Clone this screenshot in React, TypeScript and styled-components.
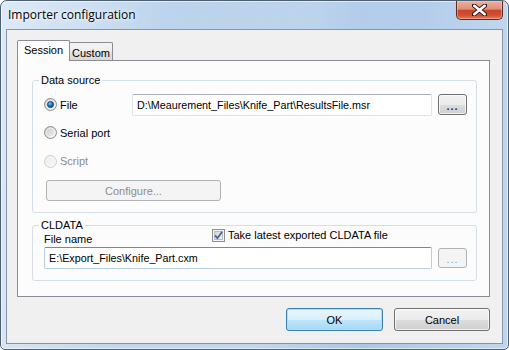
import { FC, ReactElement, ReactNode } from 'react';
import styled, { createGlobalStyle } from 'styled-components';

const GlobalStyle = createGlobalStyle`
    html, body {
        margin: 0;
        padding: 0;
        background: #ffffff;
    }
    body {
        font-family: "Liberation Sans", Arial, sans-serif;
        font-size: 11px;
        color: #000;
    }
`;

const WindowFrame = styled.div`
    box-sizing: border-box;
    width: 509px;
    height: 350px;
    display: flex;
    flex-direction: column;
    border: 1px solid #4f5f72;
    border-radius: 7px 7px 5px 5px;
    background:
        linear-gradient(100deg, rgba(255,255,255,0.35) 0%, rgba(255,255,255,0) 30%, rgba(255,255,255,0.18) 55%, rgba(255,255,255,0) 75%),
        linear-gradient(to right, #cadef2, #b7d0ea 45%, #aac7e7 70%, #c0d6ee);
    box-shadow: inset 0 0 0 1px rgba(255,255,255,0.55);
    overflow: hidden;
`;

const TitleBar = styled.div`
    height: 28px;
    flex: none;
    display: flex;
    align-items: flex-start;
    justify-content: space-between;
    padding: 0 5px 0 7px;
`;

const Title = styled.span`
    font-family: "Open Sans", "Liberation Sans", sans-serif;
    font-size: 12px;
    line-height: 28px;
    color: #000;
    text-shadow: 0 0 6px rgba(255,255,255,0.95), 0 0 3px rgba(255,255,255,0.9);
`;

const CloseButton = styled.div`
    width: 47px;
    height: 19px;
    box-sizing: border-box;
    display: flex;
    align-items: center;
    justify-content: center;
    border: 1px solid #5c2a22;
    border-top: none;
    border-radius: 0 0 5px 5px;
    background: linear-gradient(to bottom, #eab0a2 0%, #df8e7a 45%, #c8462c 52%, #cf4f30 78%, #e47b55 100%);
    box-shadow: inset 0 0 0 1px rgba(255,210,200,0.45);
`;

const Client = styled.div`
    flex: 1;
    margin: 0 5px 5px 5px;
    border: 1px solid #8596a9;
    background: #f0f0f0;
    padding: 10px 12px 11px 10px;
    display: flex;
    flex-direction: column;
`;

const TabStrip = styled.div`
    display: flex;
    align-items: flex-end;
    margin-bottom: -1px;
    height: 21px;
    position: relative;
    z-index: 1;
`;

const Tab = styled.div<{ $active?: boolean }>`
    box-sizing: border-box;
    display: flex;
    align-items: center;
    justify-content: center;
    border: 1px solid #898c95;
    border-radius: 2px 2px 0 0;
    font-size: 11px;
    ${(p) => p.$active ? `
        height: 21px;
        width: 53px;
        border-bottom: none;
        background: #fcfcfc;
        padding-bottom: 2px;
        position: relative;
        z-index: 2;
    ` : `
        height: 18px;
        width: 44px;
        margin-left: -1px;
        margin-bottom: 1px;
        border-bottom: none;
        background: linear-gradient(to bottom, #f4f4f4 0%, #ededed 50%, #e3e3e3 51%, #d8d8d8 100%);
        padding-top: 2px;
    `}
`;

const TabPanel = styled.div`
    box-sizing: border-box;
    height: 237px;
    border: 1px solid #898c95;
    background: #fcfcfc;
    padding: 13px 12px 0 14px;
    display: flex;
    flex-direction: column;
    gap: 6px;
`;

const Group = styled.fieldset<{ $padTop?: number }>`
    margin: 0;
    border: 1px solid #d5dfe5;
    border-radius: 3px;
    padding: ${(p) => p.$padTop ?? 4}px 8px 11px 11px;
    min-inline-size: 0;
`;

const Legend = styled.legend`
    padding: 0 2px;
    margin-left: -5px;
    line-height: 13px;
    font-size: 11px;
`;

const Row = styled.div<{ $h?: number }>`
    display: flex;
    align-items: center;
    height: ${(p) => p.$h ?? 28}px;
`;

const RadioLabel = styled.label<{ $disabled?: boolean; $w?: number }>`
    display: flex;
    align-items: center;
    gap: 3px;
    width: ${(p) => (p.$w ? `${p.$w}px` : 'auto')};
    color: ${(p) => (p.$disabled ? '#8d8d8d' : '#000')};
    font-size: 11px;
`;

const TextBox = styled.div<{ $focused?: boolean; $w: number }>`
    box-sizing: border-box;
    width: ${(p) => p.$w}px;
    height: 22px;
    display: flex;
    align-items: center;
    padding-left: 4px;
    background: #fff;
    border: 1px solid ${(p) => (p.$focused ? '#b5cfe7' : '#dfe2e8')};
    border-top-color: ${(p) => (p.$focused ? '#5d8fc2' : '#abadb3')};
    border-radius: 2px;
    font-size: 10.75px;
    white-space: nowrap;
    overflow: hidden;
`;

const Button = styled.div<{ $w: number; $h?: number; $disabled?: boolean; $default?: boolean }>`
    box-sizing: border-box;
    width: ${(p) => p.$w}px;
    height: ${(p) => p.$h ?? 21}px;
    display: flex;
    align-items: center;
    justify-content: center;
    border-radius: 3px;
    font-size: 11px;
    ${(p) => p.$disabled ? `
        border: 1px solid #adb2b5;
        background: #f4f4f4;
        color: #8d8d8d;
    ` : p.$default ? `
        border: 1px solid #3c7fb1;
        background: linear-gradient(to bottom, #eaf6fd 0%, #d9f0fc 50%, #bee6fd 51%, #a7d9f5 100%);
        box-shadow: inset 0 0 0 1px #a6e1f8;
        color: #000;
    ` : `
        border: 1px solid #707070;
        background: linear-gradient(to bottom, #f2f2f2 0%, #ebebeb 50%, #dddddd 51%, #cfcfcf 100%);
        box-shadow: inset 0 0 0 1px rgba(255,255,255,0.7);
        color: #000;
    `}
`;

const Dots = styled.span<{ $disabled?: boolean }>`
    letter-spacing: 1px;
    color: ${(p) => (p.$disabled ? '#9a9aa8' : '#2a1a7a')};
    font-size: 11px;
    font-weight: ${(p) => (p.$disabled ? 400 : 700)};
    padding-top: 2px;
`;

const FieldLabel = styled.span`
    width: 168px;
    align-self: flex-end;
    font-size: 11px;
    margin-bottom: -2px;
`;

const CheckLabel = styled.label`
    display: flex;
    align-items: center;
    gap: 3px;
    font-size: 11px;
`;

const Footer = styled.div`
    display: flex;
    justify-content: flex-end;
    gap: 11px;
    margin-top: 11px;
`;

const CloseGlyph: FC = () => (
    <svg width="15" height="12" viewBox="0 0 15 12">
        <path d="M2 1.5 L13 10.5 M13 1.5 L2 10.5" stroke="#3a1510" strokeWidth="4.4" strokeLinecap="round" />
        <path d="M2.3 1.8 L12.7 10.2 M12.7 1.8 L2.3 10.2" stroke="#ffffff" strokeWidth="2.6" strokeLinecap="round" />
    </svg>
);

const RadioGlyph: FC<{ checked?: boolean; disabled?: boolean }> = ({ checked, disabled }) => (
    <svg width="13" height="13" viewBox="0 0 13 13">
        <defs>
            <linearGradient id="rb-face" x1="0" y1="0" x2="1" y2="1">
                <stop offset="0" stopColor="#c4c4c4" />
                <stop offset="1" stopColor="#f7f7f7" />
            </linearGradient>
            <linearGradient id="rb-face-off" x1="0" y1="0" x2="1" y2="1">
                <stop offset="0" stopColor="#eaeaea" />
                <stop offset="1" stopColor="#fbfbfb" />
            </linearGradient>
            <radialGradient id="rb-dot" cx="0.4" cy="0.35" r="0.7">
                <stop offset="0" stopColor="#7cc6f7" />
                <stop offset="0.5" stopColor="#1f74bd" />
                <stop offset="1" stopColor="#0b3f72" />
            </radialGradient>
        </defs>
        <circle cx="6.5" cy="6.5" r="6" fill={disabled ? 'url(#rb-face-off)' : 'url(#rb-face)'} stroke={disabled ? '#cfcfcf' : '#8e8f8f'} />
        <circle cx="6.5" cy="6.5" r="4.3" fill="none" stroke={disabled ? '#f6f6f6' : '#ffffff'} strokeOpacity="0.6" />
        {checked && <circle cx="6.5" cy="6.5" r="3.1" fill="url(#rb-dot)" stroke="#143f68" strokeWidth="0.7" />}
    </svg>
);

const CheckGlyph: FC = () => (
    <svg width="13" height="13" viewBox="0 0 13 13">
        <defs>
            <linearGradient id="cb-face" x1="0" y1="0" x2="1" y2="1">
                <stop offset="0" stopColor="#d4d4d4" />
                <stop offset="1" stopColor="#f4f4f4" />
            </linearGradient>
        </defs>
        <rect x="0.5" y="0.5" width="12" height="12" fill="#f4f4f4" stroke="#8e8f8f" />
        <rect x="2.5" y="2.5" width="8" height="8" fill="url(#cb-face)" stroke="#b9bcc0" />
        <path d="M3 6.3 L5.4 9.2 L10.2 2.8" fill="none" stroke="#4f65a3" strokeWidth="1.9" strokeLinejoin="round" />
    </svg>
);

const Radio: FC<{ checked?: boolean; disabled?: boolean; width?: number; children: ReactNode }> = ({ checked, disabled, width, children }) => (
    <RadioLabel $disabled={disabled} $w={width}>
        <RadioGlyph checked={checked} disabled={disabled} />
        {children}
    </RadioLabel>
);

const App: FC = (): ReactElement => {
    return (
        <>
            <GlobalStyle />
            <WindowFrame>
                <TitleBar>
                    <Title>Importer configuration</Title>
                    <CloseButton><CloseGlyph /></CloseButton>
                </TitleBar>
                <Client>
                    <TabStrip>
                        <Tab $active>Session</Tab>
                        <Tab>Custom</Tab>
                    </TabStrip>
                    <TabPanel>
                        <Group>
                            <Legend>Data source</Legend>
                            <Row $h={27}>
                                <Radio checked width={88}>File</Radio>
                                <TextBox $w={300}>D:\Meaurement_Files\Knife_Part\ResultsFile.msr</TextBox>
                                <Button $w={29} style={{ marginLeft: 6 }}><Dots>...</Dots></Button>
                            </Row>
                            <Row $h={29}>
                                <Radio>Serial port</Radio>
                            </Row>
                            <Row $h={28}>
                                <Radio disabled>Script</Radio>
                            </Row>
                            <Row $h={21} style={{ marginTop: 5, paddingLeft: 2 }}>
                                <Button $w={175} $disabled>Configure...</Button>
                            </Row>
                        </Group>
                        <Group $padTop={0}>
                            <Legend>CLDATA</Legend>
                            <Row $h={16} style={{ marginTop: -5 }}>
                                <FieldLabel>File name</FieldLabel>
                                <CheckLabel><CheckGlyph />Take latest exported CLDATA file</CheckLabel>
                            </Row>
                            <Row $h={22} style={{ marginTop: 4 }}>
                                <TextBox $w={388} $focused>E:\Export_Files\Knife_Part.cxm</TextBox>
                                <Button $w={29} $h={20} $disabled style={{ marginLeft: 6 }}><Dots $disabled>...</Dots></Button>
                            </Row>
                        </Group>
                    </TabPanel>
                    <Footer>
                        <Button $w={97} $h={23} $default>OK</Button>
                        <Button $w={96} $h={23}>Cancel</Button>
                    </Footer>
                </Client>
            </WindowFrame>
        </>
    );
};

export default App;
